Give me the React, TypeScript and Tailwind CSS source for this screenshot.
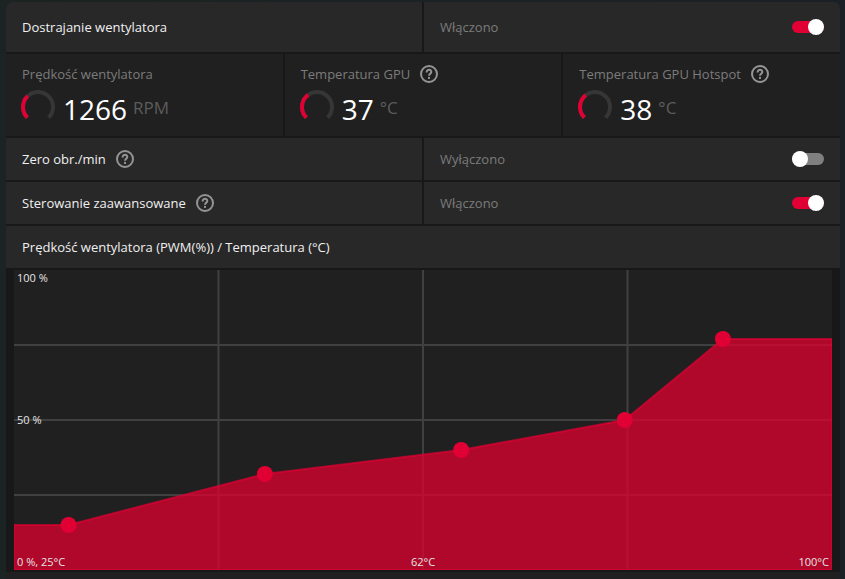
import { useState } from "react";

type Point = { temp: number; pwm: number };

const MIN_TEMP = 25;
const MAX_TEMP = 100;
const CHART_WIDTH = 818;
const CHART_HEIGHT = 300;

const curve: Point[] = [
  { temp: 30, pwm: 15 },
  { temp: 48, pwm: 32 },
  { temp: 66, pwm: 40 },
  { temp: 81, pwm: 50 },
  { temp: 90, pwm: 77 },
];

const metrics = [
  {
    label: "Prędkość wentylatora",
    value: "1266",
    unit: "RPM",
    level: 34,
    help: false,
  },
  { label: "Temperatura GPU", value: "37", unit: "°C", level: 37, help: true },
  {
    label: "Temperatura GPU Hotspot",
    value: "38",
    unit: "°C",
    level: 36,
    help: true,
  },
];

const HelpButton = ({ topic }: { topic: string }) => (
  <button type="button" aria-label={topic} className="text-[#949494]">
    <svg viewBox="0 0 18 18" fill="none" className="block size-[18px]">
      <circle cx="9" cy="9" r="8" stroke="currentColor" strokeWidth="2" />
      <path
        d="M6.7 7.4V7a2.3 2.1 0 1 1 3.6 1.6C9.4 9.3 9 9.7 9 10.8"
        stroke="currentColor"
        strokeWidth="2"
      />
      <rect x="8" y="11.9" width="2" height="2" fill="currentColor" />
    </svg>
  </button>
);

const Gauge = ({ level }: { level: number }) => (
  <svg viewBox="0 0 34 34" fill="none" className="size-[34px]">
    <path
      d="M6.4 27.6A15 15 0 1 1 27.6 27.6"
      stroke="#363636"
      strokeWidth="4"
    />
    <path
      d="M6.4 27.6A15 15 0 1 1 27.6 27.6"
      stroke="#e00034"
      strokeWidth="4"
      pathLength="100"
      strokeDasharray={`${level} 100`}
    />
  </svg>
);

type ToggleRowProps = {
  id: string;
  label: string;
  initial: boolean;
  help?: boolean;
  tall?: boolean;
};

const ToggleRow = ({ id, label, initial, help, tall }: ToggleRowProps) => {
  const [enabled, setEnabled] = useState<boolean>(initial);

  return (
    <div
      className={`grid grid-cols-2 gap-0.5 ${tall ? "h-[50px]" : "h-[42px]"}`}
    >
      <div className="flex items-center gap-2.5 bg-[#282828] px-4">
        <label htmlFor={id} className="text-[#f0f0f0]">
          {label}
        </label>
        {help && <HelpButton topic={label} />}
      </div>
      <div className="flex items-center justify-between bg-[#282828] px-4">
        <span className="text-[#7c7c7c]">
          {enabled ? "Włączono" : "Wyłączono"}
        </span>
        <input
          id={id}
          type="checkbox"
          role="switch"
          checked={enabled}
          onChange={(e) => setEnabled(e.target.checked)}
          className="relative h-3 w-8 cursor-pointer appearance-none rounded-full bg-[#808080] before:absolute before:-top-0.5 before:left-0 before:size-4 before:rounded-full before:bg-white checked:bg-[#e00034] checked:before:left-4"
        />
      </div>
    </div>
  );
};

const FanChart = () => {
  const toX = (temp: number) =>
    ((temp - MIN_TEMP) / (MAX_TEMP - MIN_TEMP)) * CHART_WIDTH;
  const toY = (pwm: number) => CHART_HEIGHT - (pwm / 100) * CHART_HEIGHT;

  const first = curve[0];
  const last = curve[curve.length - 1];
  const area = [
    `0,${CHART_HEIGHT}`,
    `0,${toY(first.pwm)}`,
    ...curve.map((p) => `${toX(p.temp)},${toY(p.pwm)}`),
    `${CHART_WIDTH},${toY(last.pwm)}`,
    `${CHART_WIDTH},${CHART_HEIGHT}`,
  ].join(" ");

  return (
    <div className="relative mx-2 bg-[#202020] text-[11px] leading-4 text-[#e4e4e4]">
      <svg
        viewBox={`0 0 ${CHART_WIDTH} ${CHART_HEIGHT}`}
        className="block w-full"
      >
        {/* grid */}
        {[1, 2, 3].map((i) => (
          <g key={i} stroke="#404040" strokeWidth="2">
            <line
              x1={(CHART_WIDTH / 4) * i}
              x2={(CHART_WIDTH / 4) * i}
              y1="0"
              y2={CHART_HEIGHT}
            />
            <line
              x1="0"
              x2={CHART_WIDTH}
              y1={(CHART_HEIGHT / 4) * i}
              y2={(CHART_HEIGHT / 4) * i}
            />
          </g>
        ))}
        <polygon
          points={area}
          fill="#e0002e"
          fillOpacity="0.75"
          stroke="#e00034"
          strokeOpacity="0.7"
          strokeWidth="2"
        />
        {curve.map((p) => (
          <circle
            key={p.temp}
            cx={toX(p.temp)}
            cy={toY(p.pwm)}
            r="8"
            fill="#e00034"
          />
        ))}
      </svg>
      <span className="absolute top-0 left-[3px]">100 %</span>
      <span className="absolute top-1/2 left-[3px] -translate-y-1/2">50 %</span>
      <div className="absolute inset-x-[3px] bottom-0 grid grid-cols-3">
        <span>0 %, 25°C</span>
        <span className="text-center">62°C</span>
        <span className="text-right">100°C</span>
      </div>
    </div>
  );
};

const App = () => {
  return (
    <div className="min-h-screen bg-linear-to-r from-[#1b2422] to-[#1b2026] pt-0.5 pr-[5px] pl-1.5 font-['Open_Sans','Noto_Sans',sans-serif] text-[13px] leading-5">
      <main className="flex min-h-[calc(100vh-2px)] flex-col gap-0.5 overflow-hidden rounded-t-md bg-[#181818]">
        <ToggleRow
          id="fan-tuning"
          label="Dostrajanie wentylatora"
          initial={true}
          tall
        />

        <div className="grid grid-cols-3 gap-0.5">
          {metrics.map((metric) => (
            <div
              key={metric.label}
              className="h-[82px] bg-[#202020] px-4 pt-2.5"
            >
              <div className="flex items-center gap-2.5 text-[#7c7c7c]">
                <span>{metric.label}</span>
                {metric.help && <HelpButton topic={metric.label} />}
              </div>
              <div className="-ml-px flex items-start pt-1.5">
                <Gauge level={metric.level} />
                <span className="ml-2 text-[28px] leading-[38px] text-white">
                  {metric.value}
                </span>
                <span className="ml-1.5 text-[17px] leading-9 text-[#5c5c5c]">
                  {metric.unit}
                </span>
              </div>
            </div>
          ))}
        </div>

        <ToggleRow id="zero-rpm" label="Zero obr./min" initial={false} help />
        <ToggleRow
          id="advanced-control"
          label="Sterowanie zaawansowane"
          initial={true}
          help
        />

        <h2 className="flex h-[42px] items-center bg-[#282828] px-4 text-[#f0f0f0]">
          Prędkość wentylatora (PWM(%)) / Temperatura (°C)
        </h2>

        <FanChart />

        <div className="grow bg-[#202020]" />
      </main>
    </div>
  );
};

export default App;
